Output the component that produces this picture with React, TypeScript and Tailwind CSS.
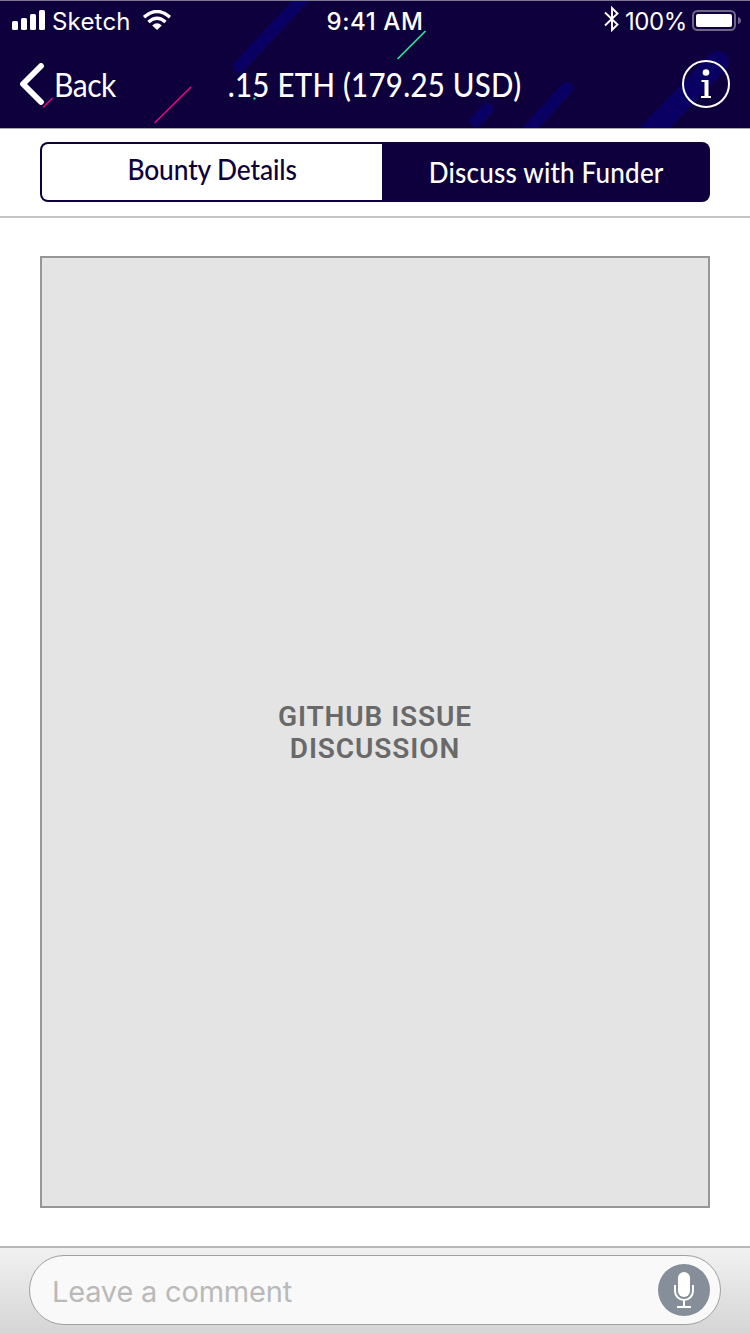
import React from "react";

function HeaderPattern() {
  return (
    <svg className="absolute inset-0 h-full w-full" viewBox="0 0 750 128" fill="none" aria-hidden="true">
      <g stroke="#0a0064" strokeLinecap="round">
        <path d="M239 66.500L309 -8" strokeWidth="12.500" />
        <path d="M476 121L487.500 109" strokeWidth="12.500" />
        <path d="M524 135L567 88" strokeWidth="12.500" />
        <path d="M643 140L718 62" strokeWidth="22" />
      </g>
      <path d="M43 107.500L52.500 98" stroke="#f0047f" strokeWidth="1.500" />
      <path d="M154.500 123L191 87" stroke="#f0047f" strokeWidth="1.500" />
      <path d="M397.500 59L425.500 31" stroke="#25e899" strokeWidth="1.700" />
      <circle cx="254.500" cy="98.500" r="1.200" fill="#25e899" />
      <path d="M0 .5H750" stroke="#7c7894" />
    </svg>
  );
}

function StatusBar() {
  return (
    <div className="relative grid h-10 grid-cols-[1fr_auto_1fr] items-center pt-0.5 pr-[9px] pl-3 font-['Inter',sans-serif] text-2xl leading-none text-white">
      <div className="flex items-center">
        <svg width="34" height="20" viewBox="0 0 34 20" fill="#fff" className="-mt-0.5">
          <rect x="0" y="11" width="6" height="9" rx="1.500" />
          <rect x="9" y="8" width="6" height="12" rx="1.500" />
          <rect x="18" y="4" width="6" height="16" rx="1.500" />
          <rect x="27" y="0" width="6" height="20" rx="1.500" />
        </svg>
        <span className="ml-1.5 w-[91px] pt-px tracking-[0.2px]">Sketch</span>
        <svg width="28" height="20" viewBox="0 0 28 20" className="-mt-0.5" fill="none" stroke="#fff">
          <path d="M1 7.200Q14 -4.300 27 7.200" strokeWidth="3.400" />
          <path d="M5.500 12Q14 4.500 22.500 12" strokeWidth="3.400" />
          <path d="M9.200 15.400Q14 11.300 18.800 15.400L14 20Z" fill="#fff" stroke="none" />
        </svg>
      </div>
      <span className="pt-0.5 pr-[3px] font-medium tracking-[0.6px]">9:41 AM</span>
      <div className="flex items-center justify-end">
        <svg width="15" height="26" viewBox="0 0 15 26" className="-mt-1" fill="none" stroke="#fff" strokeWidth="1.900">
          <path d="M1 6.500L13.500 18.500L8 24V2L13.500 7.500L1 19.500" />
        </svg>
        <span className="ml-1.5 w-[67px] pt-px tracking-[-0.4px] whitespace-nowrap">100%</span>
        <svg width="49" height="21" viewBox="0 0 49 21" className="-mt-0.5" fill="none">
          <rect x="1" y="1" width="42" height="19" rx="4.500" stroke="#6f6688" strokeWidth="2" />
          <rect x="4" y="4" width="36" height="13" rx="2" fill="#fff" />
          <path d="M46 7Q49 8 49 10.500T46 14Z" fill="#6f6688" />
        </svg>
      </div>
    </div>
  );
}

function NavBar() {
  return (
    <div className="relative grid h-[88px] grid-cols-[1fr_auto_1fr] items-center px-5 font-['Lato',sans-serif] text-[32px] leading-none text-white">
      <button className="flex items-center">
        <svg width="25" height="42" viewBox="0 0 25 42" fill="none" stroke="#fff" strokeWidth="5.800" strokeLinecap="round" strokeLinejoin="round">
          <path d="M21 3L3 21L21 39" />
        </svg>
        <span className="ml-[9px] origin-left scale-x-94 pt-0.5 tracking-[-0.5px]">Back</span>
      </button>
      <h1 className="scale-x-92 pt-0.5 font-medium tracking-[0.3px]">.15 ETH (179.25 USD)</h1>
      <button className="justify-self-end" aria-label="Information">
        <svg width="48" height="48" viewBox="0 0 48 48" fill="none">
          <circle cx="24" cy="24" r="23" stroke="#fff" strokeWidth="2" />
          <circle cx="24" cy="12.500" r="3.300" fill="#fff" />
          <path d="M19.500 20H26.500V36H29V38H19V36H22.500V22H19.500Z" fill="#fff" />
        </svg>
      </button>
    </div>
  );
}

function Tabs() {
  return (
    <div className="h-[90px] border-t border-b-2 border-t-[#aaa8b0] border-b-[#c4c4c4] px-10 pt-[13px]">
      <div className="flex h-[60px] overflow-hidden rounded-lg bg-[#0e003c] p-0.5 font-['Lato',sans-serif] text-[28px] leading-none font-medium">
        <button className="w-[340px] rounded-l-md bg-white pb-1.5 text-[#0e003c]">
          <span className="inline-block scale-x-94 tracking-[-0.1px]">Bounty Details</span>
        </button>
        <button className="flex-1 text-white">
          <span className="inline-block translate-x-px scale-x-93 tracking-[0.2px]">Discuss with Funder</span>
        </button>
      </div>
    </div>
  );
}

function CommentBar() {
  return (
    <footer className="flex h-[88px] items-start border-t-2 border-[#b8b8b8] bg-linear-to-b from-[#f1f1f1] to-[#d5d5d5] px-[29px] pt-[7px]">
      <div className="flex h-[70px] flex-1 items-center justify-between rounded-full border border-[#a0a0a0] bg-[#f9f9f9] pr-[10px] pl-[22px]">
        <span className="pt-0.5 font-['Inter',sans-serif] text-[29px] leading-none tracking-[-0.2px] text-[#b9b9b9]">Leave a comment</span>
        <svg width="52" height="52" viewBox="0 0 52 52" fill="none">
          <circle cx="26" cy="26" r="26" fill="#858e99" />
          <rect x="20" y="8" width="12" height="25" rx="6" fill="#fff" />
          <path d="M17 21V27A9 9 0 0 0 35 27V21M26 36V43M19 43H33" stroke="#fff" strokeWidth="2" />
        </svg>
      </div>
    </footer>
  );
}

export default function App() {
  return (
    <div className="flex h-[1334px] w-[750px] flex-col overflow-hidden bg-white">
      <header className="relative h-32 bg-[#0e003c]">
        <HeaderPattern />
        <StatusBar />
        <NavBar />
      </header>
      <Tabs />
      <main className="flex-1 px-10 pt-[38px] pb-[38px]">
        <div className="flex h-full items-center justify-center border-2 border-[#979797] bg-[#e4e4e4] pt-0.5 text-center font-['Roboto',sans-serif] text-[28px] leading-8 font-semibold tracking-[0.9px] text-[#696969]">
          <p>GITHUB ISSUE<br />DISCUSSION</p>
        </div>
      </main>
      <CommentBar />
    </div>
  );
}
